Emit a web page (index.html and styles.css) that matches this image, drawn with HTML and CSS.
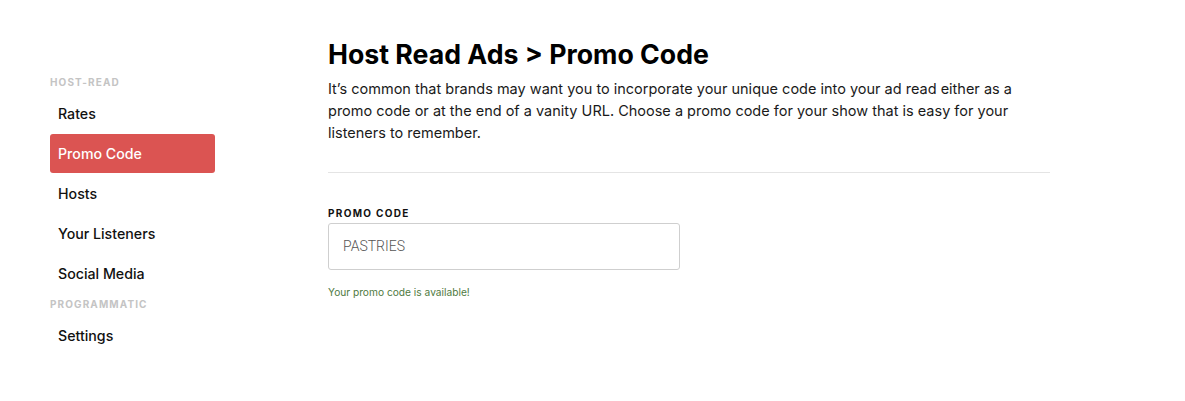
FILE: index.html
```html
<!DOCTYPE html>
<html>
<head>
<meta charset="utf-8">
<link rel="stylesheet" href="styles.css">
</head>
<body>
<div class="page">
  <nav class="sidebar">
    <div class="section-label">HOST-READ</div>
    <a class="nav-item">Rates</a>
    <a class="nav-item active">Promo Code</a>
    <a class="nav-item">Hosts</a>
    <a class="nav-item">Your Listeners</a>
    <a class="nav-item">Social Media</a>
    <div class="section-label second">PROGRAMMATIC</div>
    <a class="nav-item">Settings</a>
  </nav>
  <main class="content">
    <h1 class="title">Host Read Ads &gt; Promo Code</h1>
    <p class="desc">It’s common that brands may want you to incorporate your unique code into your ad read either as a promo code or at the end of a vanity URL. Choose a promo code for your show that is easy for your listeners to remember.</p>
    <hr class="divider">
    <label class="field-label">PROMO CODE</label>
    <div class="input">PASTRIES</div>
    <div class="success">Your promo code is available!</div>
  </main>
</div>
</body>
</html>
```

FILE: styles.css
```css
* { box-sizing: border-box; }
body {
  margin: 0;
  font-family: Inter, "Noto Sans", sans-serif;
  color: #111;
  background: #fff;
}
.page {
  display: flex;
  padding-left: 50px;
}
.sidebar {
  width: 165px;
  display: flex;
  flex-direction: column;
  padding-top: 75px;
}
.section-label {
  font-size: 10px;
  font-weight: 700;
  letter-spacing: 1.1px;
  color: #c4c4c4;
  height: 14px;
  line-height: 14px;
  margin-bottom: 5px;
}
.section-label.second {
  margin-top: 3px;
  margin-bottom: 5px;
}
.nav-item {
  display: block;
  height: 39px;
  line-height: 39px;
  padding-left: 8px;
  font-size: 14.2px;
  font-weight: 500;
  color: #111;
  border-radius: 3px;
  margin-bottom: 1px;
}
.nav-item.active {
  background: #db5452;
  color: #fff;
}
.content {
  margin-left: 113px;
  width: 722px;
  padding-top: 38px;
}
.title {
  margin: 0;
  font-size: 26.7px;
  font-weight: 700;
  line-height: 32px;
  color: #000;
}
.desc {
  margin: 8px 0 0;
  font-size: 14.5px;
  line-height: 22px;
  color: #1a1a1a;
}
.divider {
  margin: 28px 0 0;
  border: 0;
  border-top: 1px solid #e4e4e4;
}
.field-label {
  display: block;
  margin-top: 33px;
  font-size: 10px;
  font-weight: 700;
  letter-spacing: 1.3px;
  color: #111;
  line-height: 14px;
}
.input {
  margin-top: 3px;
  width: 352px;
  height: 47px;
  border: 1px solid #cfcfcf;
  border-radius: 3px;
  padding-left: 14px;
  line-height: 45px;
  font-family: Roboto, sans-serif;
  font-weight: 300;
  font-size: 14px;
  color: #555;
}
.success {
  margin-top: 16px;
  font-size: 10.2px;
  color: #4f7a42;
}
```
